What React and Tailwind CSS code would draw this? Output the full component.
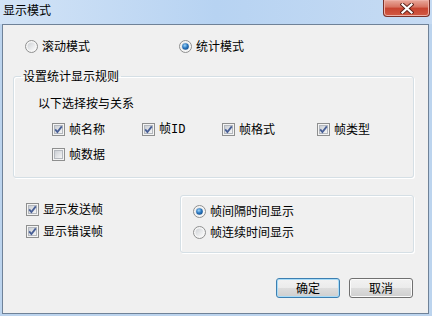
import React from 'react';

// Win7 style checkbox, drawn as a 13x13 icon
const CheckIcon = ({ checked }) => (
  <svg width="13" height="13" viewBox="0 0 13 13" className="shrink-0">
    <defs>
      <linearGradient id="cbIn" x1="0" y1="0" x2="1" y2="1">
        <stop offset="0" stopColor="#c8ccd2" />
        <stop offset="1" stopColor="#f8f8f8" />
      </linearGradient>
    </defs>
    <rect x="0.5" y="0.5" width="12" height="12" fill="#f4f4f4" stroke="#8e8f8f" />
    <rect x="2.5" y="2.5" width="8" height="8" fill="url(#cbIn)" stroke="#b4b8be" />
    {checked && (
      <path d="M3.2 6.4 L5.4 9 L9.8 3.4" fill="none" stroke="#485f96" strokeWidth="1.8" />
    )}
  </svg>
);

const RadioIcon = ({ checked }) => (
  <svg width="13" height="13" viewBox="0 0 13 13" className="shrink-0">
    <defs>
      <linearGradient id="rbIn" x1="0" y1="0" x2="1" y2="1">
        <stop offset="0" stopColor="#cfd2d6" />
        <stop offset="1" stopColor="#fbfbfb" />
      </linearGradient>
      <radialGradient id="rbDot" cx="0.4" cy="0.35" r="0.7">
        <stop offset="0" stopColor="#9fd6fa" />
        <stop offset="0.55" stopColor="#2a77c0" />
        <stop offset="1" stopColor="#164f8c" />
      </radialGradient>
    </defs>
    <circle cx="6.5" cy="6.5" r="6" fill="#f6f6f6" stroke="#8e8f8f" />
    <circle cx="6.5" cy="6.5" r="4" fill="url(#rbIn)" />
    {checked && <circle cx="6.5" cy="6.5" r="3.3" fill="url(#rbDot)" />}
  </svg>
);

const Check = ({ checked, children, className = '' }) => (
  <div className={`flex items-center h-[16px] gap-[4px] ${className}`}>
    <CheckIcon checked={checked} />
    <span>{children}</span>
  </div>
);

const Radio = ({ checked, children, className = '' }) => (
  <div className={`flex items-center h-[16px] gap-[4px] ${className}`}>
    <RadioIcon checked={checked} />
    <span>{children}</span>
  </div>
);

const Button = ({ children, isDefault }) => (
  <button
    className={`w-[64px] h-[20px] rounded-[3px] border text-[12px] leading-[16px] bg-[linear-gradient(#f2f2f2,#ebebeb_50%,#dddddd_50%,#cfcfcf)] ${
      isDefault
        ? 'border-[#3c7fb1] shadow-[inset_0_0_0_1px_#a8dcf8]'
        : 'border-[#707070] shadow-[inset_0_0_0_1px_#fbfbfb]'
    }`}
  >
    {children}
  </button>
);

export default function App() {
  return (
    <div className="w-[432px] h-[316px] flex flex-col overflow-hidden bg-[#bcd4ee] font-['Noto_Sans_CJK_SC',sans-serif] text-[12px] leading-[16px] text-black">
      {/* Title bar */}
      <div className="h-[24px] shrink-0 flex items-start bg-gradient-to-r from-[#d2e3f6] via-[#b7d3f2] to-[#c6dbf3]">
        <span className="ml-[3px] mt-[2px]">显示模式</span>
        <button className="ml-auto mr-[2px] w-[47px] h-[17px] rounded-b-[4px] border border-t-0 border-[#7a3129] bg-[linear-gradient(#e9a99c,#d7715f_45%,#c7432f_50%,#d25a43)] shadow-[inset_0_0_0_1px_#eeb0a6] flex items-center justify-center">
          <svg width="14" height="11" viewBox="0 0 14 11">
            <path d="M2.5 1.5 L11.5 9.5 M11.5 1.5 L2.5 9.5" stroke="#5b2119" strokeWidth="4" strokeLinecap="square" />
            <path d="M2.5 1.5 L11.5 9.5 M11.5 1.5 L2.5 9.5" stroke="#ffffff" strokeWidth="2.2" strokeLinecap="square" />
          </svg>
        </button>
      </div>

      {/* Client area */}
      <div className="flex-1 ml-[2px] mr-[3px] mb-[2px] bg-[#f0f0f0] border border-[#6f8298] flex flex-col">
        {/* Mode */}
        <div className="flex mt-[13px] ml-[22px]">
          <Radio className="w-[154px]">滚动模式</Radio>
          <Radio checked>统计模式</Radio>
        </div>

        {/* Statistics rules */}
        <fieldset className="mt-[14px] ml-[10px] w-[401px] px-[7px] pt-[11px] pb-[15px] border border-[#d5dfe5] rounded-[3px] shadow-[1px_1px_0_#ffffff,inset_1px_1px_0_#ffffff]">
          <legend className="px-[2px]">设置统计显示规则</legend>
          <div className="ml-[17px] h-[16px]">以下选择按与关系</div>
          <div className="flex ml-[31px] mt-[10px]">
            <Check checked className="w-[90px]">帧名称</Check>
            <Check checked className="w-[80px]">
              帧<span className="font-['Liberation_Mono',monospace]">ID</span>
            </Check>
            <Check checked className="w-[95px]">帧格式</Check>
            <Check checked>帧类型</Check>
          </div>
          <div className="flex ml-[31px] mt-[9px]">
            <Check>帧数据</Check>
          </div>
        </fieldset>

        {/* Send / error + time mode */}
        <div className="flex mt-[17px]">
          <div className="flex flex-col gap-[6px] ml-[23px] mt-[6px] w-[154px]">
            <Check checked>显示发送帧</Check>
            <Check checked>显示错误帧</Check>
          </div>
          <div className="w-[234px] h-[58px] border border-[#d5dfe5] rounded-[3px] shadow-[1px_1px_0_#ffffff,inset_1px_1px_0_#ffffff] pl-[12px] pt-[7px] flex flex-col gap-[5px]">
            <Radio checked>帧间隔时间显示</Radio>
            <Radio>帧连续时间显示</Radio>
          </div>
        </div>

        {/* Buttons */}
        <div className="flex justify-end gap-[9px] mr-[15px] mt-[25px]">
          <Button isDefault>确定</Button>
          <Button>取消</Button>
        </div>
      </div>
    </div>
  );
}
